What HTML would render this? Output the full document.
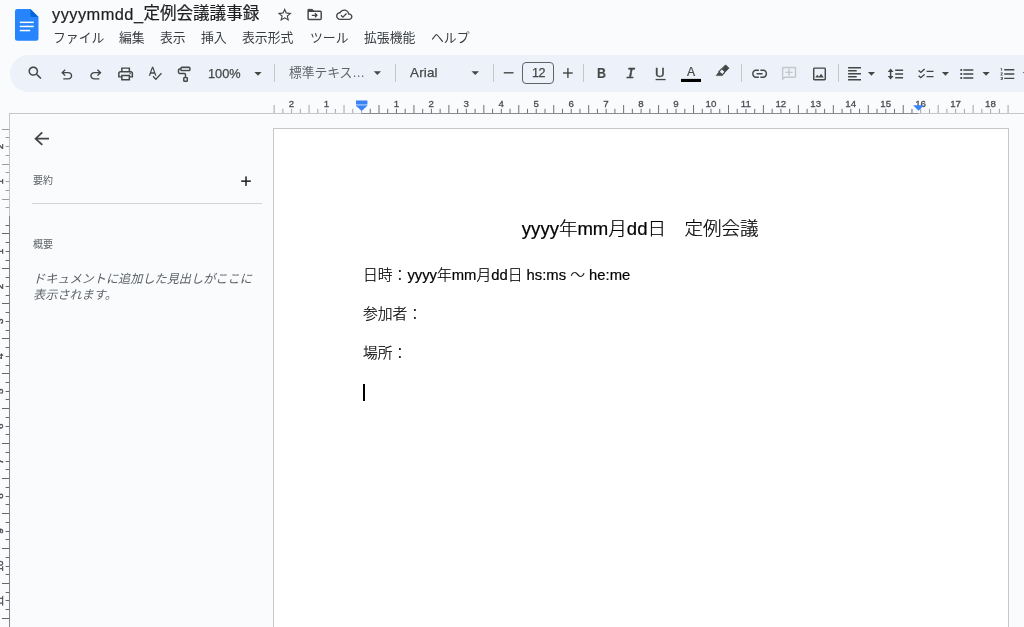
<!DOCTYPE html>
<html lang="ja"><head><meta charset="utf-8"><title>yyyymmdd_定例会議議事録</title>
<style>
html,body{margin:0;padding:0}
body{width:1024px;height:627px;overflow:hidden;background:#f9fbfd;position:relative;font-family:"Liberation Sans","Noto Sans CJK JP",sans-serif;color:#1f1f1f}
.abs{position:absolute;white-space:nowrap;will-change:transform}
#toolbar{left:10px;top:54.5px;width:1040px;height:37px;background:#edf2fa;border-radius:18.5px}
#title{left:52.2px;top:1px;font-size:16.55px;line-height:24px;color:#1f1f1f;-webkit-text-stroke:0.2px #1f1f1f}
#title span{letter-spacing:0.45px;position:relative;top:1px;font-size:16.4px}
.menu{top:27.5px;font-size:12.85px;line-height:20px;color:#3a3d40}
.tb{color:#444746;font-size:12.75px;line-height:18px;top:64px}
#fs{left:522px;top:62px;width:29.5px;height:20px;border:1px solid #5f6368;border-radius:4px}
#page{left:273px;top:128px;width:734px;height:520px;background:#fff;border:1px solid #c7c7c7}
.doc{color:#000;font-size:14.8px;line-height:22px;left:362.7px;font-weight:300;-webkit-text-stroke:0.2px #000}
#doctitle{font-weight:300;-webkit-text-stroke:0.22px #000;font-size:18.55px;line-height:26px;left:362.4px;width:556.5px;text-align:center;top:216px;color:#000}
.side{color:#5f6368;font-size:10px;line-height:14px;left:32.5px}
#hint{color:#5f6368;font-size:12.17px;line-height:16px;font-style:italic;left:33px;top:270.5px;white-space:normal;width:226px}
#hr{left:32px;top:203px;width:230px;height:1px;background:#d2d5d8}
#cursor{left:363px;top:384px;width:1.5px;height:16.6px;background:#000}
</style></head>
<body>
<div id="toolbar" class="abs"></div>
<div id="page" class="abs"></div>
<svg width="1024" height="627" viewBox="0 0 1024 627" style="position:absolute;left:0;top:0"><path fill="#2684fc" d="M17.2 9H30.4L38.5 17.1V38.6a2.2 2.2 0 0 1-2.2 2.2H17.2A2.2 2.2 0 0 1 15 38.6V11.2A2.2 2.2 0 0 1 17.2 9z"/><path fill="#0066da" d="M30.4 9L38.5 17.1H32.2a1.8 1.8 0 0 1-1.8-1.8z"/><rect x="19.8" y="21.6" width="14" height="1.5" fill="#fff"/><rect x="19.8" y="25.7" width="14" height="1.5" fill="#fff"/><rect x="19.8" y="29.8" width="10.4" height="1.5" fill="#fff"/><rect x="9" y="113" width="1015" height="1" fill="#c4c7c5"/><rect x="361.5" y="113" width="557" height="1" fill="#8a8e92"/><rect x="273.62" y="105" width="1" height="8" fill="#a2a6aa"/><rect x="282.36" y="108.8" width="1" height="4.2" fill="#a2a6aa"/><rect x="291.10" y="108.8" width="1" height="4.2" fill="#a2a6aa"/><text x="291.50" y="107.1" text-anchor="middle" font-size="9.7" fill="#4a4d50" stroke="#4a4d50" stroke-width="0.3" font-family="Liberation Sans, sans-serif">2</text><rect x="299.84" y="108.8" width="1" height="4.2" fill="#a2a6aa"/><rect x="308.57" y="105" width="1" height="8" fill="#a2a6aa"/><rect x="317.31" y="108.8" width="1" height="4.2" fill="#a2a6aa"/><rect x="326.05" y="108.8" width="1" height="4.2" fill="#a2a6aa"/><text x="326.45" y="107.1" text-anchor="middle" font-size="9.7" fill="#4a4d50" stroke="#4a4d50" stroke-width="0.3" font-family="Liberation Sans, sans-serif">1</text><rect x="334.79" y="108.8" width="1" height="4.2" fill="#a2a6aa"/><rect x="343.52" y="105" width="1" height="8" fill="#a2a6aa"/><rect x="352.26" y="108.8" width="1" height="4.2" fill="#a2a6aa"/><rect x="361.00" y="110.5" width="1" height="2.5" fill="#b0b4b8"/><rect x="369.74" y="108.8" width="1" height="4.2" fill="#6e7277"/><rect x="378.48" y="105" width="1" height="8" fill="#6e7277"/><rect x="387.21" y="108.8" width="1" height="4.2" fill="#6e7277"/><rect x="395.95" y="108.8" width="1" height="4.2" fill="#6e7277"/><text x="396.35" y="107.1" text-anchor="middle" font-size="9.7" fill="#4a4d50" stroke="#4a4d50" stroke-width="0.3" font-family="Liberation Sans, sans-serif">1</text><rect x="404.69" y="108.8" width="1" height="4.2" fill="#6e7277"/><rect x="413.43" y="105" width="1" height="8" fill="#6e7277"/><rect x="422.16" y="108.8" width="1" height="4.2" fill="#6e7277"/><rect x="430.90" y="108.8" width="1" height="4.2" fill="#6e7277"/><text x="431.30" y="107.1" text-anchor="middle" font-size="9.7" fill="#4a4d50" stroke="#4a4d50" stroke-width="0.3" font-family="Liberation Sans, sans-serif">2</text><rect x="439.64" y="108.8" width="1" height="4.2" fill="#6e7277"/><rect x="448.38" y="105" width="1" height="8" fill="#6e7277"/><rect x="457.11" y="108.8" width="1" height="4.2" fill="#6e7277"/><rect x="465.85" y="108.8" width="1" height="4.2" fill="#6e7277"/><text x="466.25" y="107.1" text-anchor="middle" font-size="9.7" fill="#4a4d50" stroke="#4a4d50" stroke-width="0.3" font-family="Liberation Sans, sans-serif">3</text><rect x="474.59" y="108.8" width="1" height="4.2" fill="#6e7277"/><rect x="483.33" y="105" width="1" height="8" fill="#6e7277"/><rect x="492.06" y="108.8" width="1" height="4.2" fill="#6e7277"/><rect x="500.80" y="108.8" width="1" height="4.2" fill="#6e7277"/><text x="501.20" y="107.1" text-anchor="middle" font-size="9.7" fill="#4a4d50" stroke="#4a4d50" stroke-width="0.3" font-family="Liberation Sans, sans-serif">4</text><rect x="509.54" y="108.8" width="1" height="4.2" fill="#6e7277"/><rect x="518.27" y="105" width="1" height="8" fill="#6e7277"/><rect x="527.01" y="108.8" width="1" height="4.2" fill="#6e7277"/><rect x="535.75" y="108.8" width="1" height="4.2" fill="#6e7277"/><text x="536.15" y="107.1" text-anchor="middle" font-size="9.7" fill="#4a4d50" stroke="#4a4d50" stroke-width="0.3" font-family="Liberation Sans, sans-serif">5</text><rect x="544.49" y="108.8" width="1" height="4.2" fill="#6e7277"/><rect x="553.23" y="105" width="1" height="8" fill="#6e7277"/><rect x="561.96" y="108.8" width="1" height="4.2" fill="#6e7277"/><rect x="570.70" y="108.8" width="1" height="4.2" fill="#6e7277"/><text x="571.10" y="107.1" text-anchor="middle" font-size="9.7" fill="#4a4d50" stroke="#4a4d50" stroke-width="0.3" font-family="Liberation Sans, sans-serif">6</text><rect x="579.44" y="108.8" width="1" height="4.2" fill="#6e7277"/><rect x="588.17" y="105" width="1" height="8" fill="#6e7277"/><rect x="596.91" y="108.8" width="1" height="4.2" fill="#6e7277"/><rect x="605.65" y="108.8" width="1" height="4.2" fill="#6e7277"/><text x="606.05" y="107.1" text-anchor="middle" font-size="9.7" fill="#4a4d50" stroke="#4a4d50" stroke-width="0.3" font-family="Liberation Sans, sans-serif">7</text><rect x="614.39" y="108.8" width="1" height="4.2" fill="#6e7277"/><rect x="623.12" y="105" width="1" height="8" fill="#6e7277"/><rect x="631.86" y="108.8" width="1" height="4.2" fill="#6e7277"/><rect x="640.60" y="108.8" width="1" height="4.2" fill="#6e7277"/><text x="641.00" y="107.1" text-anchor="middle" font-size="9.7" fill="#4a4d50" stroke="#4a4d50" stroke-width="0.3" font-family="Liberation Sans, sans-serif">8</text><rect x="649.34" y="108.8" width="1" height="4.2" fill="#6e7277"/><rect x="658.08" y="105" width="1" height="8" fill="#6e7277"/><rect x="666.81" y="108.8" width="1" height="4.2" fill="#6e7277"/><rect x="675.55" y="108.8" width="1" height="4.2" fill="#6e7277"/><text x="675.95" y="107.1" text-anchor="middle" font-size="9.7" fill="#4a4d50" stroke="#4a4d50" stroke-width="0.3" font-family="Liberation Sans, sans-serif">9</text><rect x="684.29" y="108.8" width="1" height="4.2" fill="#6e7277"/><rect x="693.03" y="105" width="1" height="8" fill="#6e7277"/><rect x="701.76" y="108.8" width="1" height="4.2" fill="#6e7277"/><rect x="710.50" y="108.8" width="1" height="4.2" fill="#6e7277"/><text x="710.90" y="107.1" text-anchor="middle" font-size="9.7" fill="#4a4d50" stroke="#4a4d50" stroke-width="0.3" font-family="Liberation Sans, sans-serif">10</text><rect x="719.24" y="108.8" width="1" height="4.2" fill="#6e7277"/><rect x="727.98" y="105" width="1" height="8" fill="#6e7277"/><rect x="736.71" y="108.8" width="1" height="4.2" fill="#6e7277"/><rect x="745.45" y="108.8" width="1" height="4.2" fill="#6e7277"/><text x="745.85" y="107.1" text-anchor="middle" font-size="9.7" fill="#4a4d50" stroke="#4a4d50" stroke-width="0.3" font-family="Liberation Sans, sans-serif">11</text><rect x="754.19" y="108.8" width="1" height="4.2" fill="#6e7277"/><rect x="762.92" y="105" width="1" height="8" fill="#6e7277"/><rect x="771.66" y="108.8" width="1" height="4.2" fill="#6e7277"/><rect x="780.40" y="108.8" width="1" height="4.2" fill="#6e7277"/><text x="780.80" y="107.1" text-anchor="middle" font-size="9.7" fill="#4a4d50" stroke="#4a4d50" stroke-width="0.3" font-family="Liberation Sans, sans-serif">12</text><rect x="789.14" y="108.8" width="1" height="4.2" fill="#6e7277"/><rect x="797.88" y="105" width="1" height="8" fill="#6e7277"/><rect x="806.61" y="108.8" width="1" height="4.2" fill="#6e7277"/><rect x="815.35" y="108.8" width="1" height="4.2" fill="#6e7277"/><text x="815.75" y="107.1" text-anchor="middle" font-size="9.7" fill="#4a4d50" stroke="#4a4d50" stroke-width="0.3" font-family="Liberation Sans, sans-serif">13</text><rect x="824.09" y="108.8" width="1" height="4.2" fill="#6e7277"/><rect x="832.83" y="105" width="1" height="8" fill="#6e7277"/><rect x="841.56" y="108.8" width="1" height="4.2" fill="#6e7277"/><rect x="850.30" y="108.8" width="1" height="4.2" fill="#6e7277"/><text x="850.70" y="107.1" text-anchor="middle" font-size="9.7" fill="#4a4d50" stroke="#4a4d50" stroke-width="0.3" font-family="Liberation Sans, sans-serif">14</text><rect x="859.04" y="108.8" width="1" height="4.2" fill="#6e7277"/><rect x="867.78" y="105" width="1" height="8" fill="#6e7277"/><rect x="876.51" y="108.8" width="1" height="4.2" fill="#6e7277"/><rect x="885.25" y="108.8" width="1" height="4.2" fill="#6e7277"/><text x="885.65" y="107.1" text-anchor="middle" font-size="9.7" fill="#4a4d50" stroke="#4a4d50" stroke-width="0.3" font-family="Liberation Sans, sans-serif">15</text><rect x="893.99" y="108.8" width="1" height="4.2" fill="#6e7277"/><rect x="902.73" y="105" width="1" height="8" fill="#6e7277"/><rect x="911.46" y="108.8" width="1" height="4.2" fill="#6e7277"/><rect x="920.20" y="108.8" width="1" height="4.2" fill="#a2a6aa"/><text x="920.60" y="107.1" text-anchor="middle" font-size="9.7" fill="#4a4d50" stroke="#4a4d50" stroke-width="0.3" font-family="Liberation Sans, sans-serif">16</text><rect x="928.94" y="108.8" width="1" height="4.2" fill="#a2a6aa"/><rect x="937.68" y="105" width="1" height="8" fill="#a2a6aa"/><rect x="946.41" y="108.8" width="1" height="4.2" fill="#a2a6aa"/><rect x="955.15" y="108.8" width="1" height="4.2" fill="#a2a6aa"/><text x="955.55" y="107.1" text-anchor="middle" font-size="9.7" fill="#4a4d50" stroke="#4a4d50" stroke-width="0.3" font-family="Liberation Sans, sans-serif">17</text><rect x="963.89" y="108.8" width="1" height="4.2" fill="#a2a6aa"/><rect x="972.62" y="105" width="1" height="8" fill="#a2a6aa"/><rect x="981.36" y="108.8" width="1" height="4.2" fill="#a2a6aa"/><rect x="990.10" y="108.8" width="1" height="4.2" fill="#a2a6aa"/><text x="990.50" y="107.1" text-anchor="middle" font-size="9.7" fill="#4a4d50" stroke="#4a4d50" stroke-width="0.3" font-family="Liberation Sans, sans-serif">18</text><rect x="998.84" y="108.8" width="1" height="4.2" fill="#a2a6aa"/><rect x="1007.58" y="105" width="1" height="8" fill="#a2a6aa"/><path fill="#8ab4f8" d="M356 100.6h11.3v5.6h-11.3z"/><path fill="#3b82f6" d="M356 100.6h11.3v3.4h-11.3z"/><path fill="#3b82f6" d="M356 105.8h11.3l-5.65 5.2z"/><path fill="#3b82f6" d="M913.1 105.2h10.9l-5.45 5.5z"/><rect x="9" y="113" width="1" height="514" fill="#c4c7c5"/><rect x="9" y="216" width="1" height="411" fill="#80848a"/><rect x="2" y="129" width="7" height="1" fill="#9a9ea3"/><rect x="5.6" y="137" width="3.4" height="1" fill="#9a9ea3"/><rect x="5.6" y="146" width="3.4" height="1" fill="#9a9ea3"/><text transform="translate(3.1 146.60) rotate(-90)" text-anchor="middle" font-size="9.9" fill="#4a4d50" stroke="#4a4d50" stroke-width="0.45" font-family="Liberation Sans, sans-serif">2</text><rect x="5.6" y="155" width="3.4" height="1" fill="#9a9ea3"/><rect x="2" y="164" width="7" height="1" fill="#9a9ea3"/><rect x="5.6" y="172" width="3.4" height="1" fill="#9a9ea3"/><rect x="5.6" y="181" width="3.4" height="1" fill="#9a9ea3"/><text transform="translate(3.1 181.55) rotate(-90)" text-anchor="middle" font-size="9.9" fill="#4a4d50" stroke="#4a4d50" stroke-width="0.45" font-family="Liberation Sans, sans-serif">1</text><rect x="5.6" y="190" width="3.4" height="1" fill="#9a9ea3"/><rect x="2" y="199" width="7" height="1" fill="#9a9ea3"/><rect x="5.6" y="207" width="3.4" height="1" fill="#9a9ea3"/><rect x="5.6" y="225" width="3.4" height="1" fill="#64686d"/><rect x="2" y="233" width="7" height="1" fill="#64686d"/><rect x="5.6" y="242" width="3.4" height="1" fill="#64686d"/><rect x="5.6" y="251" width="3.4" height="1" fill="#64686d"/><text transform="translate(3.1 251.45) rotate(-90)" text-anchor="middle" font-size="9.9" fill="#4a4d50" stroke="#4a4d50" stroke-width="0.45" font-family="Liberation Sans, sans-serif">1</text><rect x="5.6" y="260" width="3.4" height="1" fill="#64686d"/><rect x="2" y="268" width="7" height="1" fill="#64686d"/><rect x="5.6" y="277" width="3.4" height="1" fill="#64686d"/><rect x="5.6" y="286" width="3.4" height="1" fill="#64686d"/><text transform="translate(3.1 286.40) rotate(-90)" text-anchor="middle" font-size="9.9" fill="#4a4d50" stroke="#4a4d50" stroke-width="0.45" font-family="Liberation Sans, sans-serif">2</text><rect x="5.6" y="295" width="3.4" height="1" fill="#64686d"/><rect x="2" y="303" width="7" height="1" fill="#64686d"/><rect x="5.6" y="312" width="3.4" height="1" fill="#64686d"/><rect x="5.6" y="321" width="3.4" height="1" fill="#64686d"/><text transform="translate(3.1 321.35) rotate(-90)" text-anchor="middle" font-size="9.9" fill="#4a4d50" stroke="#4a4d50" stroke-width="0.45" font-family="Liberation Sans, sans-serif">3</text><rect x="5.6" y="330" width="3.4" height="1" fill="#64686d"/><rect x="2" y="338" width="7" height="1" fill="#64686d"/><rect x="5.6" y="347" width="3.4" height="1" fill="#64686d"/><rect x="5.6" y="356" width="3.4" height="1" fill="#64686d"/><text transform="translate(3.1 356.30) rotate(-90)" text-anchor="middle" font-size="9.9" fill="#4a4d50" stroke="#4a4d50" stroke-width="0.45" font-family="Liberation Sans, sans-serif">4</text><rect x="5.6" y="365" width="3.4" height="1" fill="#64686d"/><rect x="2" y="373" width="7" height="1" fill="#64686d"/><rect x="5.6" y="382" width="3.4" height="1" fill="#64686d"/><rect x="5.6" y="391" width="3.4" height="1" fill="#64686d"/><text transform="translate(3.1 391.25) rotate(-90)" text-anchor="middle" font-size="9.9" fill="#4a4d50" stroke="#4a4d50" stroke-width="0.45" font-family="Liberation Sans, sans-serif">5</text><rect x="5.6" y="399" width="3.4" height="1" fill="#64686d"/><rect x="2" y="408" width="7" height="1" fill="#64686d"/><rect x="5.6" y="417" width="3.4" height="1" fill="#64686d"/><rect x="5.6" y="426" width="3.4" height="1" fill="#64686d"/><text transform="translate(3.1 426.20) rotate(-90)" text-anchor="middle" font-size="9.9" fill="#4a4d50" stroke="#4a4d50" stroke-width="0.45" font-family="Liberation Sans, sans-serif">6</text><rect x="5.6" y="434" width="3.4" height="1" fill="#64686d"/><rect x="2" y="443" width="7" height="1" fill="#64686d"/><rect x="5.6" y="452" width="3.4" height="1" fill="#64686d"/><rect x="5.6" y="461" width="3.4" height="1" fill="#64686d"/><text transform="translate(3.1 461.15) rotate(-90)" text-anchor="middle" font-size="9.9" fill="#4a4d50" stroke="#4a4d50" stroke-width="0.45" font-family="Liberation Sans, sans-serif">7</text><rect x="5.6" y="469" width="3.4" height="1" fill="#64686d"/><rect x="2" y="478" width="7" height="1" fill="#64686d"/><rect x="5.6" y="487" width="3.4" height="1" fill="#64686d"/><rect x="5.6" y="496" width="3.4" height="1" fill="#64686d"/><text transform="translate(3.1 496.10) rotate(-90)" text-anchor="middle" font-size="9.9" fill="#4a4d50" stroke="#4a4d50" stroke-width="0.45" font-family="Liberation Sans, sans-serif">8</text><rect x="5.6" y="504" width="3.4" height="1" fill="#64686d"/><rect x="2" y="513" width="7" height="1" fill="#64686d"/><rect x="5.6" y="522" width="3.4" height="1" fill="#64686d"/><rect x="5.6" y="531" width="3.4" height="1" fill="#64686d"/><text transform="translate(3.1 531.05) rotate(-90)" text-anchor="middle" font-size="9.9" fill="#4a4d50" stroke="#4a4d50" stroke-width="0.45" font-family="Liberation Sans, sans-serif">9</text><rect x="5.6" y="539" width="3.4" height="1" fill="#64686d"/><rect x="2" y="548" width="7" height="1" fill="#64686d"/><rect x="5.6" y="557" width="3.4" height="1" fill="#64686d"/><rect x="5.6" y="566" width="3.4" height="1" fill="#64686d"/><text transform="translate(3.1 566.00) rotate(-90)" text-anchor="middle" font-size="9.9" fill="#4a4d50" stroke="#4a4d50" stroke-width="0.45" font-family="Liberation Sans, sans-serif">10</text><rect x="5.6" y="574" width="3.4" height="1" fill="#64686d"/><rect x="2" y="583" width="7" height="1" fill="#64686d"/><rect x="5.6" y="592" width="3.4" height="1" fill="#64686d"/><rect x="5.6" y="600" width="3.4" height="1" fill="#64686d"/><text transform="translate(3.1 600.95) rotate(-90)" text-anchor="middle" font-size="9.9" fill="#4a4d50" stroke="#4a4d50" stroke-width="0.45" font-family="Liberation Sans, sans-serif">11</text><rect x="5.6" y="609" width="3.4" height="1" fill="#64686d"/><rect x="2" y="618" width="7" height="1" fill="#64686d"/><rect x="5.6" y="627" width="3.4" height="1" fill="#64686d"/><path fill="#444746" transform="translate(276.18 6.74) scale(0.7100 0.6789)" d="M22 9.24l-7.19-.62L12 2 9.19 8.63 2 9.24l5.46 4.73L5.82 21 12 17.27 18.18 21l-1.63-7.03L22 9.24zM12 15.4l-3.76 2.27 1-4.28-3.32-2.88 4.38-.38L12 6.1l1.71 4.04 4.38.38-3.32 2.88 1 4.28L12 15.4z"/><path fill="#444746" transform="translate(336.00 6.75) scale(0.6875 0.6625)" d="M19.35 10.04C18.67 6.59 15.64 4 12 4 9.11 4 6.6 5.64 5.35 8.04 2.34 8.36 0 10.91 0 14c0 3.31 2.69 6 6 6h13c2.76 0 5-2.24 5-5 0-2.64-2.05-4.78-4.65-4.96zM19 18H6c-2.21 0-4-1.79-4-4 0-2.05 1.53-3.76 3.56-3.97l1.07-.11.5-.95C8.08 7.14 9.94 6 12 6c2.62 0 4.88 1.86 5.39 4.43l.3 1.5 1.53.11c1.56.1 2.78 1.41 2.78 2.96 0 1.65-1.35 3-3 3zm-9-3.82l-2.09-2.09L6.5 13.5 10 17l6.01-6.01-1.41-1.41z"/><path fill="#444746" transform="translate(26.27 64.36) scale(0.7433 0.7147)" d="M15.5 14h-.79l-.28-.27C15.41 12.59 16 11.11 16 9.5 16 5.91 13.09 3 9.5 3S3 5.91 3 9.5 5.91 16 9.5 16c1.61 0 3.09-.59 4.23-1.57l.27.28v.79l5 4.99L20.49 19l-4.99-5zm-6 0C7.01 14 5 11.99 5 9.5S7.01 5 9.5 5 14 7.01 14 9.5 11.99 14 9.5 14z"/><path fill="#444746" transform="translate(58.50 66.52) scale(0.6875 0.6833)" d="M7 19v-2h7.1q1.575 0 2.738-1T18 13.5 16.838 11 14.1 10H7.8l2.6 2.6L9 14 4 9l5-5 1.4 1.4L7.8 8h6.3q2.425 0 4.163 1.575T20 13.5t-1.737 3.925T14.1 19z"/><path fill="#444746" transform="translate(87.44 66.52) scale(0.7031 0.6833)" d="M9.9 19q-2.425 0-4.163-1.575T4 13.5t1.737-3.925T9.9 8h6.3l-2.6-2.6L15 4l5 5-5 5-1.4-1.4 2.6-2.6H9.9q-1.575 0-2.738 1T6 13.5 7.163 16 9.9 17H17v2z"/><path fill="#444746" transform="translate(116.60 65.22) scale(0.7500 0.7278)" d="M19 8h-1V3H6v5H5c-1.66 0-3 1.34-3 3v6h4v4h12v-4h4v-6c0-1.66-1.34-3-3-3zM8 5h8v3H8V5zm8 14H8v-4h8v4zm2-4v-2H6v2H4v-4c0-.55.45-1 1-1h14c.55 0 1 .45 1 1v4h-2zM18 10.5a1 1 0 1 0 0 2 1 1 0 0 0 0-2z"/><path fill="#444746" transform="translate(147.18 64.67) scale(0.6402 0.6923)" d="M12.45 16h2.09L9.43 3H7.57L2.46 16h2.09l1.12-3h5.64l1.14 3zm-6.02-5L8.5 5.48 10.57 11H6.43zm15.16.59l-8.09 8.09L9.83 16l-1.41 1.41 5.09 5.09L23 13l-1.41-1.41z"/><path fill="#444746" transform="translate(750.60 63.55) scale(0.7500 0.8500)" d="M3.9 12c0-1.71 1.39-3.1 3.1-3.1h4V7H7c-2.76 0-5 2.24-5 5s2.24 5 5 5h4v-1.9H7c-1.71 0-3.1-1.39-3.1-3.1zM8 13h8v-2H8v2zm9-6h-4v1.9h4c1.71 0 3.1 1.39 3.1 3.1s-1.39 3.1-3.1 3.1h-4V17h4c2.76 0 5-2.24 5-5s-2.24-5-5-5z"/><path fill="#c3c7cc" transform="translate(780.46 65.35) scale(0.7175 0.7000)" d="M2 4c0-1.1.9-2 2-2h16c1.1 0 2 .9 2 2v12c0 1.1-.9 2-2 2H6l-4 4V4zm2 13.17L5.17 16H20V4H4v13.17zM11 5h2v4h4v2h-4v4h-2v-4H7V9h4z"/><path fill="#444746" transform="translate(810.83 65.22) scale(0.7222 0.7278)" d="M19 5v14H5V5h14m0-2H5c-1.1 0-2 .9-2 2v14c0 1.1.9 2 2 2h14c1.1 0 2-.9 2-2V5c0-1.1-.9-2-2-2zm-4.86 8.86l-3 3.87L9 13.14 6 17h12l-3.86-5.14z"/><path fill="#444746" transform="translate(845.95 64.73) scale(0.7167 0.7556)" d="M15 15H3v2h12v-2zm0-8H3v2h12V7zM3 13h18v-2H3v2zm0 8h18v-2H3v2zM3 3v2h18V3H3z"/><path fill="#444746" transform="translate(916.56 65.99) scale(0.7700 0.6636)" d="M22 7h-9v2h9V7zm0 8h-9v2h9v-2zM5.54 11L2 7.46l1.41-1.41 2.12 2.12 4.24-4.24 1.41 1.41L5.54 11zm0 8L2 15.46l1.41-1.41 2.12 2.12 4.24-4.24 1.41 1.41L5.54 19z"/><path fill="#444746" transform="translate(958.43 66.00) scale(0.7081 0.6667)" d="M4 10.5c-.83 0-1.5.67-1.5 1.5s.67 1.5 1.5 1.5 1.5-.67 1.5-1.5-.67-1.5-1.5-1.5zm0-6c-.83 0-1.5.67-1.5 1.5S3.17 7.5 4 7.5 5.5 6.83 5.5 6 4.83 4.5 4 4.5zm0 12c-.83 0-1.5.68-1.5 1.5s.68 1.5 1.5 1.5 1.5-.68 1.5-1.5-.67-1.5-1.5-1.5zM7 19h14v-2H7v2zm0-6h14v-2H7v2zm0-8v2h14V5H7z"/><path fill="#444746" transform="translate(999.16 65.30) scale(0.7211 0.7250)" d="M2 17h2v.5H3v1h1v.5H2v1h3v-4H2v1zm1-9h1V4H2v1h1v3zm-1 3h1.8L2 13.1v.9h3v-1H3.2L5 10.9V10H2v1zm5-6v2h14V5H7zm0 14h14v-2H7v2zm0-6h14v-2H7v2z"/><path fill="#444746" transform="translate(30.62 128.22) scale(0.9188 0.8688)" d="M20 11H7.83l5.59-5.59L12 4l-8 8 8 8 1.41-1.41L7.83 13H20v-2z"/><path fill="#444746" d="M254.4 72H261.6L258.0 75.75z"/><path fill="#444746" d="M373.75 71.3H381L377.375 75.1z"/><path fill="#444746" d="M471.5 71.3H479L475.25 75.1z"/><path fill="#444746" d="M867.9 72H875L871.45 75.75z"/><path fill="#444746" d="M941.9 72H949L945.45 75.75z"/><path fill="#444746" d="M982.5 72H989.7L986.1 75.75z"/><path fill="#444746" d="M1022.7 72H1030L1026.35 75.75z"/><rect x="274" y="64" width="1" height="18" fill="#c7c7c7"/><rect x="395" y="64" width="1" height="18" fill="#c7c7c7"/><rect x="493" y="64" width="1" height="18" fill="#c7c7c7"/><rect x="583" y="64" width="1" height="18" fill="#c7c7c7"/><rect x="741" y="64" width="1" height="18" fill="#c7c7c7"/><rect x="838" y="64" width="1" height="18" fill="#c7c7c7"/><g fill="none" stroke="#444746" stroke-width="1.45" stroke-linejoin="round"><rect x="180.9" y="67.3" width="9" height="3.3" rx="0.9" fill="#cfd3d8"/><path d="M180.9 69H179.6a1.1 1.1 0 0 0-1.1 1.1V72.3a1.1 1.1 0 0 0 1.1 1.1H184.4a1.1 1.1 0 0 1 1.1 1.1V77.4"/><rect x="183.8" y="77.6" width="3.5" height="3.7" rx="0.5"/></g><g fill="#444746" stroke="#444746" stroke-linejoin="round"><path stroke-width="1" d="M725.6 64.9L728.9 68.2 725.1 72 721.8 68.7z"/><path fill="none" stroke-width="1.3" d="M721.6 68.9L718.9 71.6 722.2 74.9 724.9 72.2"/><path stroke-width="0.6" d="M718.6 72.3L716.2 75.6H721.9L722.4 75z"/></g><g fill="none" stroke="#444746" stroke-width="1.45" stroke-linejoin="round"><path d="M308.1 11.2H320.3a0.9 0.9 0 0 1 .9 .9V18.5a0.9 0.9 0 0 1 -.9 .9H309a0.9 0.9 0 0 1 -.9 -.9z"/><path fill="#444746" stroke-width="1" d="M308 9.4H312.3L313.8 11H308z"/><path stroke-width="1.3" d="M311.8 15.3H316.6M314.9 13.2L317 15.3 314.9 17.4"/></g><g fill="#444746"><rect x="889.85" y="70" width="1.5" height="8" /><path d="M887.7 71.9L890.6 68.5 893.5 71.9z"/><path d="M887.7 76.1L890.6 79.5 893.5 76.1z"/><rect x="895.2" y="69.5" width="7.9" height="1.5"/><rect x="895.2" y="73.25" width="7.9" height="1.5"/><rect x="895.2" y="77" width="7.9" height="1.5"/></g><rect x="503.75" y="72.1" width="9.75" height="1.4" fill="#444746"/><rect x="563" y="72.3" width="9.75" height="1.4" fill="#444746"/><rect x="567.2" y="68.1" width="1.4" height="9.8" fill="#444746"/><rect x="241.2" y="180.4" width="9.6" height="1.5" fill="#1f1f1f"/><rect x="245.25" y="176.4" width="1.5" height="9.5" fill="#1f1f1f"/><rect x="681" y="78.9" width="20" height="3.1" fill="#000"/><rect x="655.6" y="78.9" width="10" height="1.3" fill="#444746"/></svg>
<div id="title" class="abs"><span>yyyymmdd_</span>定例会議議事録</div>
<div class="abs menu" style="left:53px">ファイル</div>
<div class="abs menu" style="left:119px">編集</div>
<div class="abs menu" style="left:160px">表示</div>
<div class="abs menu" style="left:201px">挿入</div>
<div class="abs menu" style="left:242px">表示形式</div>
<div class="abs menu" style="left:310px">ツール</div>
<div class="abs menu" style="left:364px">拡張機能</div>
<div class="abs menu" style="left:431px">ヘルプ</div>
<div class="abs tb" style="left:208.3px;top:65px;-webkit-text-stroke:0.25px #444746">100%</div>
<div class="abs tb" style="left:288.5px;color:#5f6368">標準テキス…</div>
<div class="abs tb" style="left:410px;font-size:13.4px;letter-spacing:0.2px;-webkit-text-stroke:0.25px #444746">Arial</div>
<div id="fs" class="abs"></div>
<div class="abs tb" style="left:532px;font-size:12.6px;letter-spacing:-0.6px;-webkit-text-stroke:0.25px #444746">12</div>
<div class="abs tb" style="left:597px;font-weight:bold;font-size:14.3px;transform:scaleX(0.86);transform-origin:0 0;-webkit-text-stroke:0.15px #444746">B</div>
<div class="abs tb" style="left:626px;font-style:italic;font-size:15.5px;top:65.3px;-webkit-text-stroke:0.5px #444746;font-family:'Liberation Mono',monospace">I</div>
<div class="abs tb" style="left:655.2px;font-size:13.4px;-webkit-text-stroke:0.45px #444746">U</div>
<div class="abs tb" style="left:687px;font-size:12.2px;top:62.5px;-webkit-text-stroke:0.2px #444746">A</div>
<div class="abs side" style="top:173.5px">要約</div>
<div id="hr" class="abs"></div>
<div class="abs side" style="top:237.5px">概要</div>
<div id="hint" class="abs">ドキュメントに追加した見出しがここに表示されます。</div>
<div id="doctitle" class="abs">yyyy年mm月dd日　定例会議</div>
<div class="abs doc" style="top:263.8px">日時：yyyy年mm月dd日 hs:ms ～ he:me</div>
<div class="abs doc" style="top:302.5px">参加者：</div>
<div class="abs doc" style="top:341.8px">場所：</div>
<div id="cursor" class="abs"></div>
</body></html>
